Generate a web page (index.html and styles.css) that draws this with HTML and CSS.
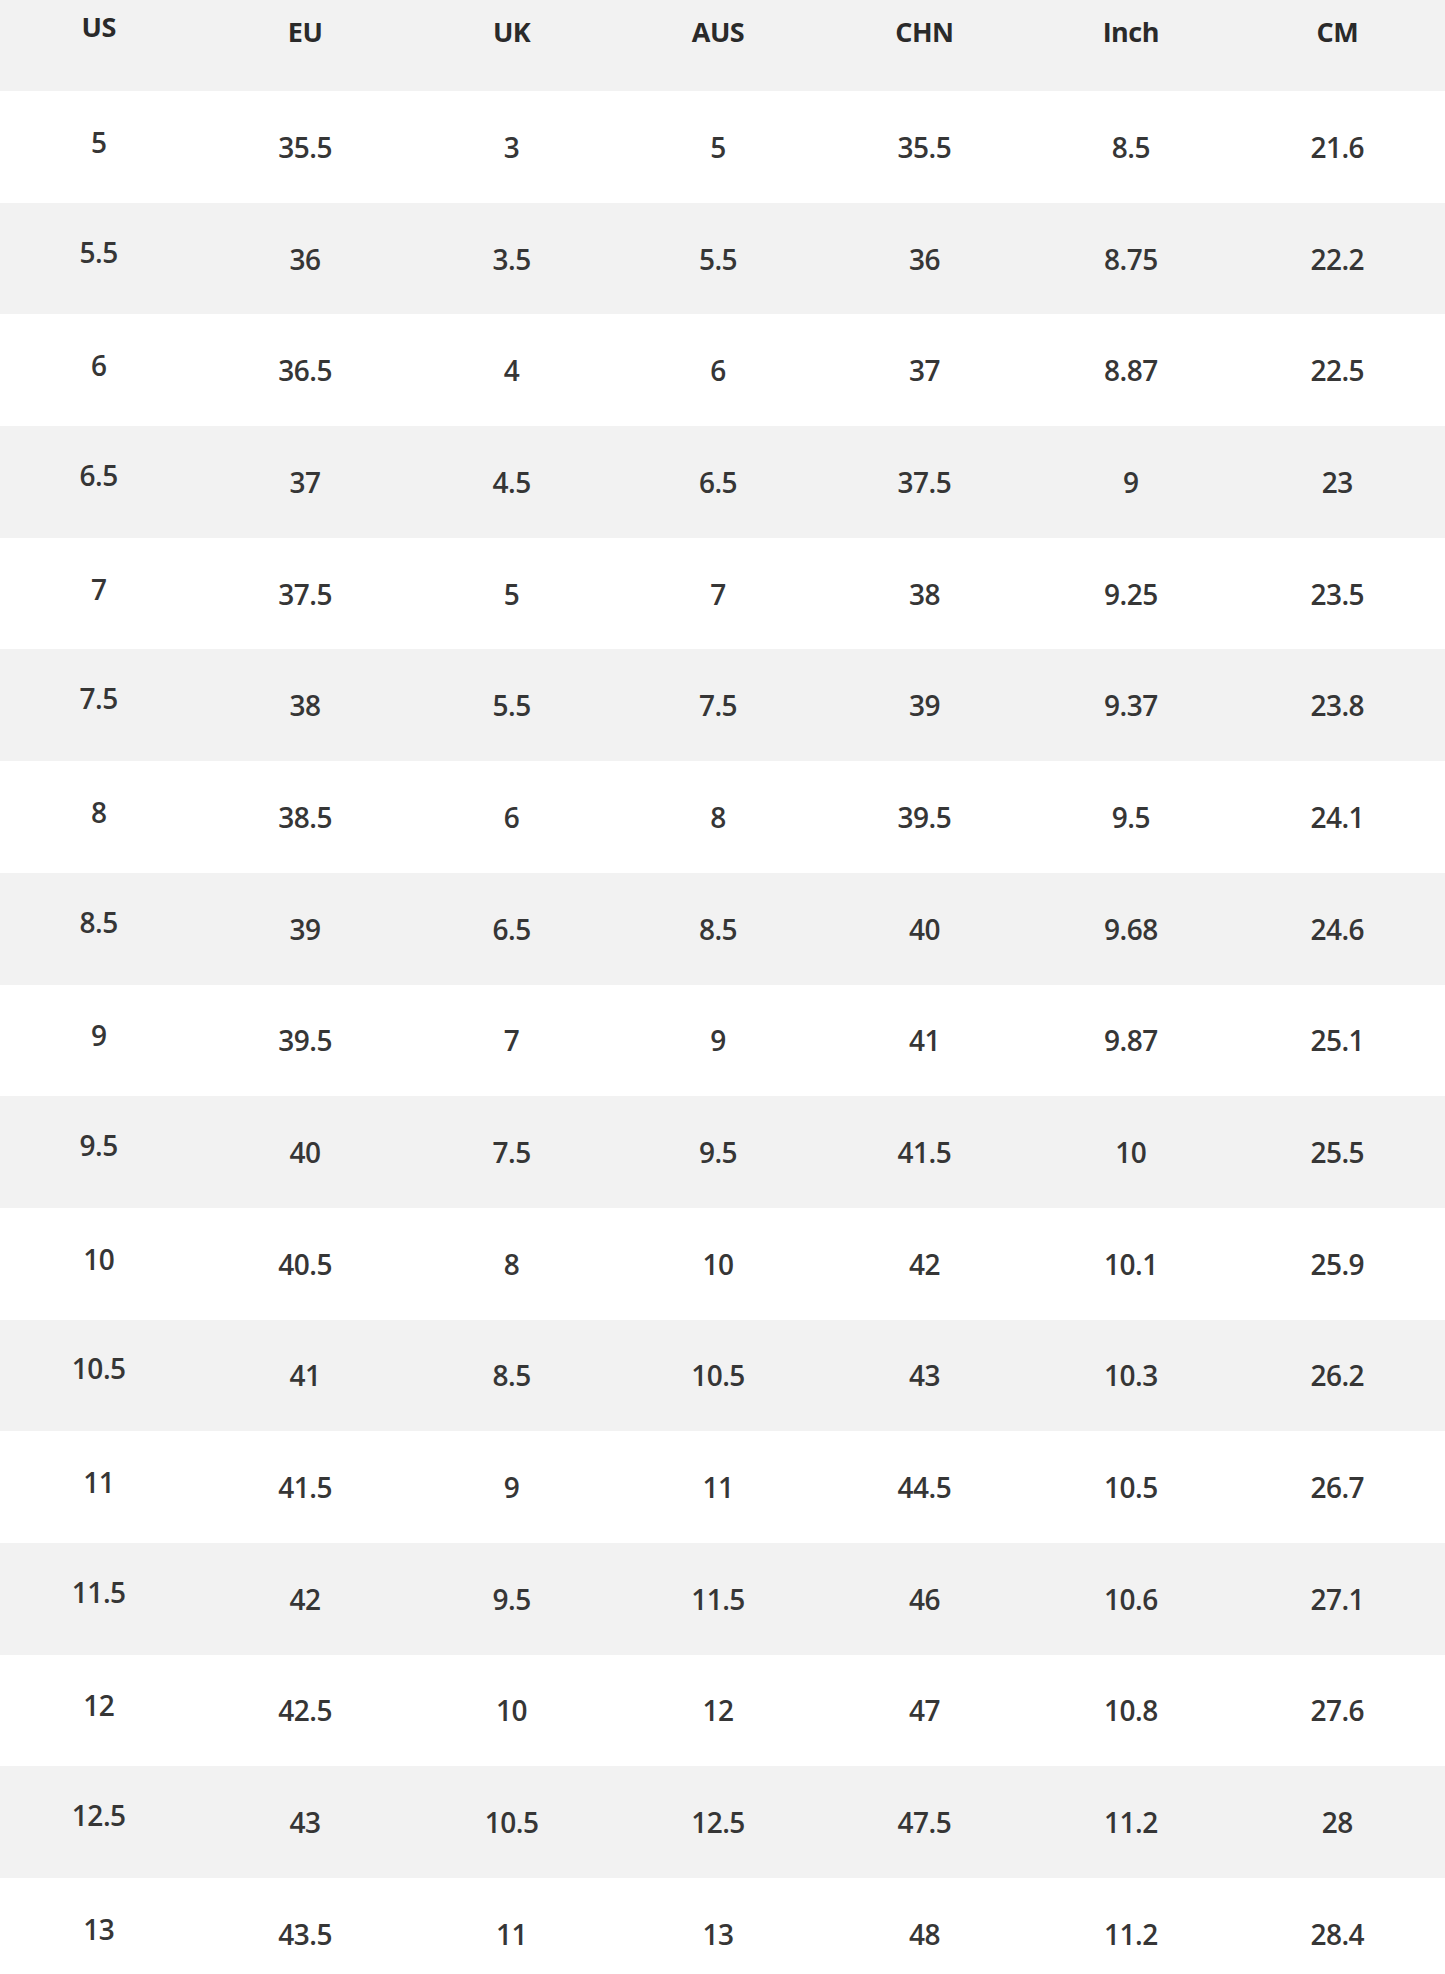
FILE: index.html
```html
<!DOCTYPE html>
<html lang="en">
<head>
<meta charset="utf-8">
<title>Size Chart</title>
<link rel="stylesheet" href="styles.css">
</head>
<body>
<table class="size-table">
  <thead>
    <tr class="head-row">
      <th class="c-first">US</th><th>EU</th><th>UK</th><th>AUS</th><th>CHN</th><th>Inch</th><th>CM</th>
    </tr>
  </thead>
  <tbody>
    <tr class="row-w"><td class="c-first">5</td><td>35.5</td><td>3</td><td>5</td><td>35.5</td><td>8.5</td><td>21.6</td></tr>
    <tr class="row-g"><td class="c-first">5.5</td><td>36</td><td>3.5</td><td>5.5</td><td>36</td><td>8.75</td><td>22.2</td></tr>
    <tr class="row-w"><td class="c-first">6</td><td>36.5</td><td>4</td><td>6</td><td>37</td><td>8.87</td><td>22.5</td></tr>
    <tr class="row-g"><td class="c-first">6.5</td><td>37</td><td>4.5</td><td>6.5</td><td>37.5</td><td>9</td><td>23</td></tr>
    <tr class="row-w"><td class="c-first">7</td><td>37.5</td><td>5</td><td>7</td><td>38</td><td>9.25</td><td>23.5</td></tr>
    <tr class="row-g"><td class="c-first">7.5</td><td>38</td><td>5.5</td><td>7.5</td><td>39</td><td>9.37</td><td>23.8</td></tr>
    <tr class="row-w"><td class="c-first">8</td><td>38.5</td><td>6</td><td>8</td><td>39.5</td><td>9.5</td><td>24.1</td></tr>
    <tr class="row-g"><td class="c-first">8.5</td><td>39</td><td>6.5</td><td>8.5</td><td>40</td><td>9.68</td><td>24.6</td></tr>
    <tr class="row-w"><td class="c-first">9</td><td>39.5</td><td>7</td><td>9</td><td>41</td><td>9.87</td><td>25.1</td></tr>
    <tr class="row-g"><td class="c-first">9.5</td><td>40</td><td>7.5</td><td>9.5</td><td>41.5</td><td>10</td><td>25.5</td></tr>
    <tr class="row-w"><td class="c-first">10</td><td>40.5</td><td>8</td><td>10</td><td>42</td><td>10.1</td><td>25.9</td></tr>
    <tr class="row-g"><td class="c-first">10.5</td><td>41</td><td>8.5</td><td>10.5</td><td>43</td><td>10.3</td><td>26.2</td></tr>
    <tr class="row-w"><td class="c-first">11</td><td>41.5</td><td>9</td><td>11</td><td>44.5</td><td>10.5</td><td>26.7</td></tr>
    <tr class="row-g"><td class="c-first">11.5</td><td>42</td><td>9.5</td><td>11.5</td><td>46</td><td>10.6</td><td>27.1</td></tr>
    <tr class="row-w"><td class="c-first">12</td><td>42.5</td><td>10</td><td>12</td><td>47</td><td>10.8</td><td>27.6</td></tr>
    <tr class="row-g"><td class="c-first">12.5</td><td>43</td><td>10.5</td><td>12.5</td><td>47.5</td><td>11.2</td><td>28</td></tr>
    <tr class="row-w"><td class="c-first">13</td><td>43.5</td><td>11</td><td>13</td><td>48</td><td>11.2</td><td>28.4</td></tr>
  </tbody>
</table>
</body>
</html>
```
FILE: styles.css
```css
html, body {
  margin: 0;
  padding: 0;
  background: #ffffff;
}

body {
  font-family: "Open Sans", "Liberation Sans", sans-serif;
  color: #363636;
  overflow: hidden;
}

.size-table {
  width: 100%;
  border-collapse: collapse;
  table-layout: fixed;
}

.size-table th,
.size-table td {
  padding: 0 9px 0 0;
  text-align: center;
  letter-spacing: -0.5px;
}

.head-row {
  background: #f2f2f2;
  height: 91px;
}

.head-row th {
  font-size: 27px;
  font-weight: 700;
  color: #2a2a2a;
  vertical-align: top;
  line-height: 40px;
  padding-top: 12px;
}

.head-row th.c-first {
  padding-top: 7px;
}

.row-g,
.row-w {
  height: 111.7px;
}

.size-table td {
  font-size: 28px;
  font-weight: 600;
  line-height: 36px;
  vertical-align: middle;
  padding-bottom: 0;
}

.size-table td.c-first {
  padding-bottom: 10px;
}

.row-g td.c-first {
  padding-bottom: 14px;
}

.row-g {
  background: #f2f2f2;
}

.row-w {
  background: #ffffff;
}
```
